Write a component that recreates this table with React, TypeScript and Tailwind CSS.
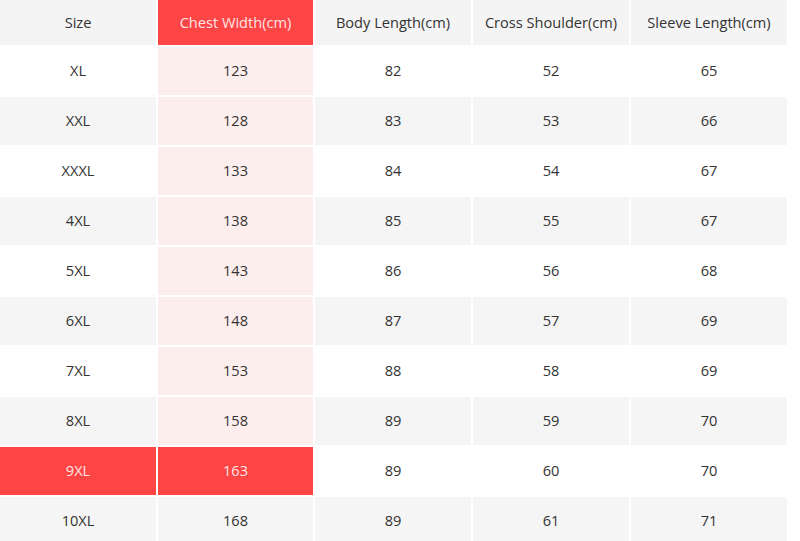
const rows = [
  ['XL', '123', '82', '52', '65'],
  ['XXL', '128', '83', '53', '66'],
  ['XXXL', '133', '84', '54', '67'],
  ['4XL', '138', '85', '55', '67'],
  ['5XL', '143', '86', '56', '68'],
  ['6XL', '148', '87', '57', '69'],
  ['7XL', '153', '88', '58', '69'],
  ['8XL', '158', '89', '59', '70'],
  ['9XL', '163', '89', '60', '70'],
  ['10XL', '168', '89', '61', '71'],
];

const headers = ['Size', 'Chest Width(cm)', 'Body Length(cm)', 'Cross Shoulder(cm)', 'Sleeve Length(cm)'];

export default function App() {
  return (
    <div
      className="w-[800px] h-[541px] overflow-hidden bg-white text-[14.6px] text-[#333]"
      style={{ fontFamily: '"Open Sans", "Noto Sans", sans-serif' }}
    >
      <div className="grid grid-cols-[156px_155px_156px_156px_156px] gap-[2px]">
        {headers.map((h, i) => (
          <div
            key={h}
            className={`h-[45px] flex items-center justify-center ${
              i === 1 ? 'bg-[#fd4545] text-[#ffe4e4]' : 'bg-[#f4f4f4]'
            }`}
          >
            {h}
          </div>
        ))}
        {rows.map((row, r) => {
          const gray = r % 2 === 1;
          const hot = row[0] === '9XL';
          return row.map((v, c) => {
            let cls = gray ? 'bg-[#f5f5f5]' : 'bg-white';
            if (c === 1 && r < 8) cls = 'bg-[#fdeeee]';
            if (hot && c < 2) cls = 'bg-[#fd4545] text-[#ffe4e4]';
            return (
              <div key={`${r}-${c}`} className={`h-[48px] flex items-center justify-center ${cls}`}>
                {v}
              </div>
            );
          });
        })}
      </div>
    </div>
  );
}
